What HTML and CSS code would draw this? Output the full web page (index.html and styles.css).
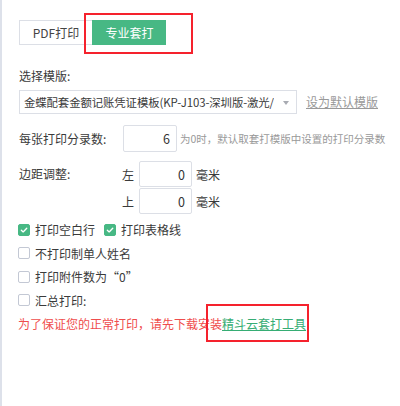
FILE: index.html
```html
<!DOCTYPE html>
<html lang="zh-CN">
<head>
<meta charset="utf-8">
<title>套打设置</title>
<link rel="stylesheet" href="styles.css">
</head>
<body>
<div class="page">
  <div class="tabs">
    <div class="tab">PDF打印</div>
    <div class="tab active">专业套打</div>
  </div>
  <span class="mark mark-tab"></span>

  <div class="label">选择模版:</div>
  <div class="select-row">
    <div class="select">
      <span class="select-text">金蝶配套金额记账凭证模板(KP-J103-深圳版-激光/</span>
      <span class="caret"></span>
    </div>
    <a class="link-gray">设为默认模版</a>
  </div>

  <div class="field-row">
    <span class="field-label">每张打印分录数:</span>
    <div class="input">6</div>
    <span class="hint">为0时，默认取套打模版中设置的打印分录数</span>
  </div>

  <div class="margin-row">
    <span class="field-label margin-label">边距调整:</span>
    <div class="margin-inputs">
      <div class="mi"><span class="side">左</span><div class="input small">0</div><span class="unit">毫米</span></div>
      <div class="mi"><span class="side">上</span><div class="input small">0</div><span class="unit">毫米</span></div>
    </div>
  </div>

  <div class="checks">
    <div class="check-row">
      <label class="check"><span class="box checked"><svg viewBox="0 0 12 12" width="12" height="12"><path d="M2.8 6.2 L5 8.3 L9.3 3.8" fill="none" stroke="#fff" stroke-width="1.6" stroke-linecap="round" stroke-linejoin="round"/></svg></span>打印空白行</label>
      <label class="check second"><span class="box checked"><svg viewBox="0 0 12 12" width="12" height="12"><path d="M2.8 6.2 L5 8.3 L9.3 3.8" fill="none" stroke="#fff" stroke-width="1.6" stroke-linecap="round" stroke-linejoin="round"/></svg></span>打印表格线</label>
    </div>
    <div class="check-row"><label class="check"><span class="box"></span>不打印制单人姓名</label></div>
    <div class="check-row"><label class="check"><span class="box"></span>打印附件数为“0”</label></div>
    <div class="check-row"><label class="check"><span class="box"></span>汇总打印:</label></div>
  </div>

  <div class="notice">为了保证您的正常打印，请先下载安装<a class="link-green">精斗云套打工具</a></div>
  <span class="mark mark-link"></span>
</div>
</body>
</html>
```

FILE: styles.css
```css
html, body {
  margin: 0;
  padding: 0;
  background: #fff;
}

body {
  font-family: "Noto Sans CJK SC", "Noto Sans", sans-serif;
  font-size: 12px;
  color: #3a3a3a;
}

.page {
  position: relative;
  height: 406px;
  box-sizing: border-box;
  border-left: 2px solid #dde1ea;
  padding: 20px 0 0 17px;
}

.tabs {
  display: flex;
  height: 25px;
}

.tab {
  box-sizing: border-box;
  height: 25px;
  width: 73px;
  border: 1px solid #dcdfe6;
  border-right: none;
  display: flex;
  align-items: center;
  justify-content: center;
  color: #444;
  background: #fff;
  line-height: 1;
}

.tab.active {
  width: 74px;
  background: #47b884;
  border-color: #47b884;
  color: #fff;
}

.mark {
  position: absolute;
  box-sizing: border-box;
  border: 2px solid #f5222d;
}

.mark-tab {
  left: 82px;
  top: 13px;
  width: 109px;
  height: 41px;
}

.mark-link {
  left: 204px;
  top: 304px;
  width: 103px;
  height: 38px;
}

.label {
  margin-top: 23px;
  line-height: 16px;
  height: 16px;
}

.select-row {
  margin-top: 6px;
  display: flex;
  align-items: center;
  height: 24px;
}

.select {
  box-sizing: border-box;
  width: 278px;
  height: 24px;
  border: 1px solid #dcdfe6;
  display: flex;
  align-items: center;
  padding-left: 4px;
  position: relative;
}

.select-text {
  white-space: nowrap;
  overflow: hidden;
  font-size: 11.4px;
  letter-spacing: -0.1px;
  line-height: 22px;
}

.caret {
  position: absolute;
  right: 7px;
  top: 10px;
  width: 0;
  height: 0;
  border-left: 3px solid transparent;
  border-right: 3px solid transparent;
  border-top: 4px solid #a8abb2;
}

.link-gray {
  margin-left: 9px;
  color: #999;
  text-decoration: underline;
  line-height: 16px;
}

.field-row {
  margin-top: 11px;
  display: flex;
  align-items: center;
  height: 27px;
}

.field-label {
  width: 104px;
  flex: none;
}

.input {
  box-sizing: border-box;
  width: 54px;
  height: 27px;
  border: 1px solid #dcdfe6;
  border-radius: 2px;
  display: flex;
  align-items: center;
  justify-content: flex-end;
  padding-right: 6px;
  font-size: 12.5px;
  color: #333;
}

.hint {
  margin-left: 3px;
  font-size: 10.5px;
  color: #999;
  white-space: nowrap;
}

.margin-row {
  margin-top: 9px;
  display: flex;
  align-items: flex-start;
}

.margin-label {
  width: 103px;
  line-height: 26px;
}

.margin-inputs {
  display: flex;
  flex-direction: column;
  gap: 1px;
}

.mi {
  display: flex;
  align-items: center;
  height: 26px;
}

.side {
  width: 12px;
  margin-right: 5px;
}

.input.small {
  width: 53px;
  height: 26px;
}

.unit {
  margin-left: 4px;
}

.checks {
  margin-top: 4px;
  display: flex;
  flex-direction: column;
}

.check-row {
  display: flex;
  align-items: center;
  height: 23.5px;
}

.check {
  display: flex;
  align-items: center;
  margin-left: -1px;
}

.check.second {
  margin-left: 9px;
}

.box {
  box-sizing: border-box;
  width: 12px;
  height: 12px;
  border: 1px solid #c3c8d4;
  border-radius: 2px;
  margin-right: 5px;
  display: flex;
  align-items: center;
  justify-content: center;
  background: #fff;
}

.box.checked {
  background: #47b884;
  border-color: #47b884;
}

.box svg {
  display: block;
}

.notice {
  margin-left: -1px;
  height: 23.5px;
  line-height: 23.5px;
  color: #ef4d4d;
  white-space: nowrap;
}

.link-green {
  color: #36ad74;
  text-decoration: underline;
}
```
